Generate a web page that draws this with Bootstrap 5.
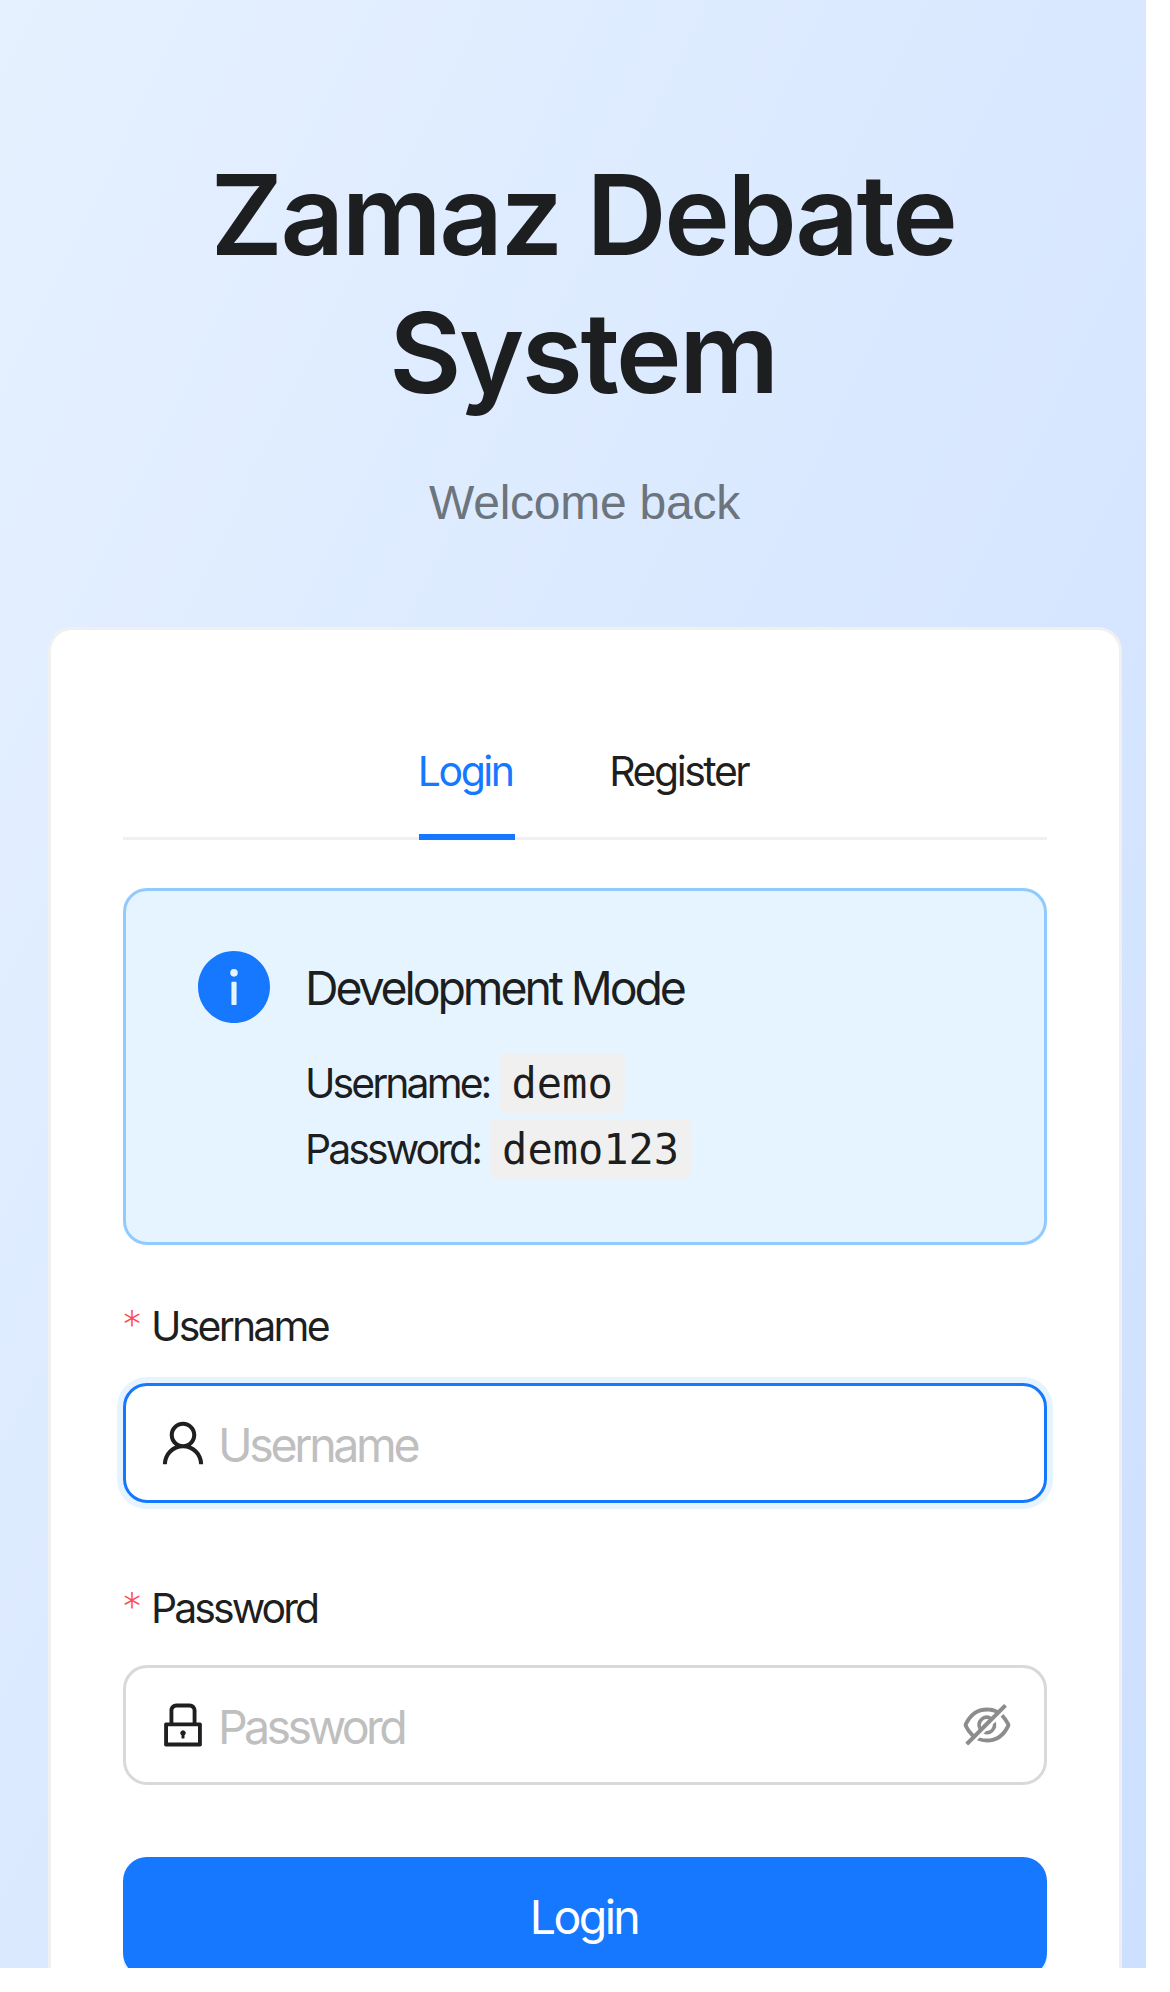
<!DOCTYPE html>
<html lang="en">
<head>
<meta charset="utf-8">
<meta name="viewport" content="width=device-width, initial-scale=1">
<title>Zamaz Debate System</title>
<link href="https://cdn.jsdelivr.net/npm/bootstrap@5.3.0/dist/css/bootstrap.min.css" rel="stylesheet">
<style>
  :root { --brand: #1677ff; --ink: rgba(0, 0, 0, .88); --line: #f0f0f0; }
  html, body { height: 1992px; overflow: hidden; }
  body { font-family: Inter, "Liberation Sans", sans-serif; font-size: 41px; line-height: 66px; color: var(--ink); background: #fff; }
  .auth-page { width: 1146px; height: 1968px; padding: 146px 24px 0 48px; background: linear-gradient(to bottom right, #e6f1ff, #d9e8ff 50%, #cbdeff) 0 0 / 1146px 2350px no-repeat; }
  .auth-title { font-size: 111px; line-height: 138px; font-weight: 600; letter-spacing: -2.45px; padding-right: 4px; margin-bottom: 45px; color: #1c1e1f; }
  .auth-sub { font-family: "Liberation Sans", Arial, sans-serif; font-size: 48px; line-height: 72px; letter-spacing: -.25px; color: #6c757d; padding-right: 1px; margin-bottom: 88px; }
  .auth-card { border: 3px solid var(--line); border-radius: 24px; padding: 72px; height: 1500px; }
  .auth-tabs { border-bottom: 3px solid var(--line); height: 138px; gap: 96px; margin-bottom: 48px; }
  .auth-tabs .nav-link { padding: 36px 0 0; height: 138px; color: var(--ink); white-space: nowrap; letter-spacing: -2.45px; width: 140px; text-indent: -1.5px; }
  .auth-tabs .nav-link.active { color: var(--brand); width: 95.4px; border-bottom: 6px solid var(--brand); }
  .dev-note { height: 357px; border: 3px solid #91caff; border-radius: 24px; background: #e6f4ff; padding: 60px 72px; gap: 35px; color: var(--ink); }
  .dev-note svg { width: 72px; height: 72px; fill: var(--brand); }
  .dev-title { font-size: 46.5px; line-height: 74px; letter-spacing: -3.13px; margin-bottom: 25px; }
  .dev-line { letter-spacing: -2.95px; }
  .dev-line code { font: 42px/1 "DejaVu Sans Mono", monospace; letter-spacing: 0; color: inherit; background: var(--line); border-radius: 6px; padding: 6px 12px 5px; margin-left: 1.5px; }
  .field-label { margin: 48px 0 24px; letter-spacing: -2.8px; }
  .field-label[for=pass] { letter-spacing: -2.95px; }
  .field-label + .field-box + .field-label { margin-top: 72px; }
  .req-star { width: 29px; margin-left: -1px; font-size: 40px; line-height: 64px; font-weight: 200; color: #ff4d4f; letter-spacing: 0; }
  .field-box { height: 120px; border: 3px solid #d9d9d9; border-radius: 24px; padding: 0 33px; background: #fff; }
  .field-box.is-active { border-color: var(--brand); box-shadow: 0 0 0 6px #e6f4ff; }
  .field-box svg { width: 48px; height: 48px; fill: var(--ink); }
  .field-box svg.eye { fill: #8c8c8c; }
  .field-box .form-control { font-size: 46.5px; line-height: 72px; padding: 3px 0 0 11px; letter-spacing: -3.33px; box-shadow: none; }
  .field-box .form-control[type=password] { letter-spacing: -3.65px; }
  .field-box .form-control::placeholder { color: #bfbfbf; opacity: 1; }
  .login-btn { height: 120px; margin-top: 72px; border: 0; border-radius: 24px; background: var(--brand); font-size: 46.5px; letter-spacing: -2.6px; padding: 2px 2px 0 0; box-shadow: 0 6px 0 rgba(5, 145, 255, .1); }
</style>
</head>
<body>
<main class="auth-page overflow-hidden">
  <header class="text-center">
    <h1 class="auth-title mt-0">Zamaz Debate System</h1>
    <p class="auth-sub">Welcome back</p>
  </header>
  <section class="card auth-card">
    <nav class="nav auth-tabs justify-content-center flex-nowrap">
      <a class="nav-link active" href="#">Login</a>
      <a class="nav-link" href="#">Register</a>
    </nav>
    <div class="dev-note d-flex align-items-start">
      <svg class="flex-shrink-0" viewBox="64 64 896 896" aria-hidden="true"><path d="M512 64C264.600 64 64 264.600 64 512s200.600 448 448 448 448-200.600 448-448S759.400 64 512 64zm32 664c0 4.400-3.600 8-8 8h-48c-4.400 0-8-3.600-8-8V456c0-4.400 3.600-8 8-8h48c4.400 0 8 3.600 8 8v272zm-32-344a48.010 48.010 0 0 1 0-96 48.010 48.010 0 0 1 0 96z"/></svg>
      <div>
        <div class="dev-title">Development Mode</div>
        <div class="dev-line">Username: <code>demo</code></div>
        <div class="dev-line">Password: <code>demo123</code></div>
      </div>
    </div>
    <label class="field-label d-flex" for="user"><span class="req-star">*</span>Username</label>
    <div class="field-box is-active d-flex align-items-center">
      <svg class="flex-shrink-0" viewBox="64 64 896 896" aria-hidden="true"><path d="M858.500 763.600a374 374 0 0 0-80.600-119.500 375.630 375.630 0 0 0-119.500-80.600c-.4-.2-.8-.3-1.200-.5C719.500 518 760 444.700 760 362c0-137-111-248-248-248S264 225 264 362c0 82.700 40.500 156 102.800 201.100-.4.2-.8.3-1.200.5-44.800 18.900-85 46-119.500 80.600a375.630 375.630 0 0 0-80.600 119.500A371.700 371.700 0 0 0 136 901.800a8 8 0 0 0 8 8.200h60c4.400 0 7.900-3.500 8-7.800 2-77.200 33-149.500 87.800-204.300 56.700-56.700 132-87.900 212.200-87.900s155.500 31.200 212.200 87.900C779 752.700 810 825 812 902.200c.1 4.400 3.600 7.800 8 7.800h60a8 8 0 0 0 8-8.200c-1-47.800-10.900-94.300-29.500-138.200zM512 534c-45.900 0-89.100-17.900-121.600-50.400S340 407.900 340 362c0-45.900 17.900-89.100 50.400-121.600S466.100 190 512 190s89.100 17.900 121.600 50.400S684 316.100 684 362c0 45.900-17.900 89.100-50.400 121.600S557.900 534 512 534z"/></svg>
      <input id="user" type="text" class="form-control border-0 bg-transparent" placeholder="Username">
    </div>
    <label class="field-label d-flex" for="pass"><span class="req-star">*</span>Password</label>
    <div class="field-box d-flex align-items-center">
      <svg class="flex-shrink-0" viewBox="64 64 896 896" aria-hidden="true"><path d="M832 464h-68V240c0-70.700-57.300-128-128-128H388c-70.700 0-128 57.300-128 128v224h-68c-17.700 0-32 14.300-32 32v384c0 17.700 14.300 32 32 32h640c17.700 0 32-14.300 32-32V496c0-17.700-14.300-32-32-32zM332 240c0-30.900 25.100-56 56-56h248c30.900 0 56 25.100 56 56v224H332V240zm460 600H232V536h560v304zM484 701v53c0 4.400 3.600 8 8 8h40c4.400 0 8-3.600 8-8v-53a48.010 48.010 0 1 0-56 0z"/></svg>
      <input id="pass" type="password" class="form-control border-0 bg-transparent" placeholder="Password">
      <svg class="eye flex-shrink-0" viewBox="64 64 896 896" aria-hidden="true"><path d="M942.200 486.200Q889.470 375.110 816.700 305l-50.880 50.880C807.310 395.530 843.450 447.400 874.700 512 791.500 684.200 673.400 766 512 766q-72.670 0-133.870-22.380L323 798.750Q408 838 512 838q288.300 0 430.200-300.300a60.290 60.290 0 0 0 0-51.500zm-63.570-320.640L836 122.880a8 8 0 0 0-11.320 0L715.310 232.200Q624.860 186 512 186q-288.300 0-430.200 300.300a60.300 60.300 0 0 0 0 51.500q56.690 119.400 136.500 191.410L112.480 835a8 8 0 0 0 0 11.310L155.170 889a8 8 0 0 0 11.310 0l712.150-712.120a8 8 0 0 0 0-11.320zM149.300 512C232.600 339.800 350.700 258 512 258c54.540 0 104.130 9.360 149.120 28.390l-70.300 70.300a176 176 0 0 0-238.130 238.130l-83.420 83.420C223.100 637.490 183.300 582.280 149.300 512zm246.700 0a112.110 112.110 0 0 1 146.200-106.690L401.310 546.200A112 112 0 0 1 396 512z"/><path d="M508 624c-3.460 0-6.870-.16-10.250-.47l-52.820 52.820a176.090 176.090 0 0 0 227.420-227.420l-52.820 52.820c.31 3.380.47 6.790.47 10.250a111.940 111.940 0 0 1-112 112z"/></svg>
    </div>
    <button type="button" class="btn btn-primary login-btn w-100 flex-shrink-0">Login</button>
  </section>
</main>
<script src="https://cdn.jsdelivr.net/npm/bootstrap@5.3.0/dist/js/bootstrap.bundle.min.js"></script>
</body>
</html>
